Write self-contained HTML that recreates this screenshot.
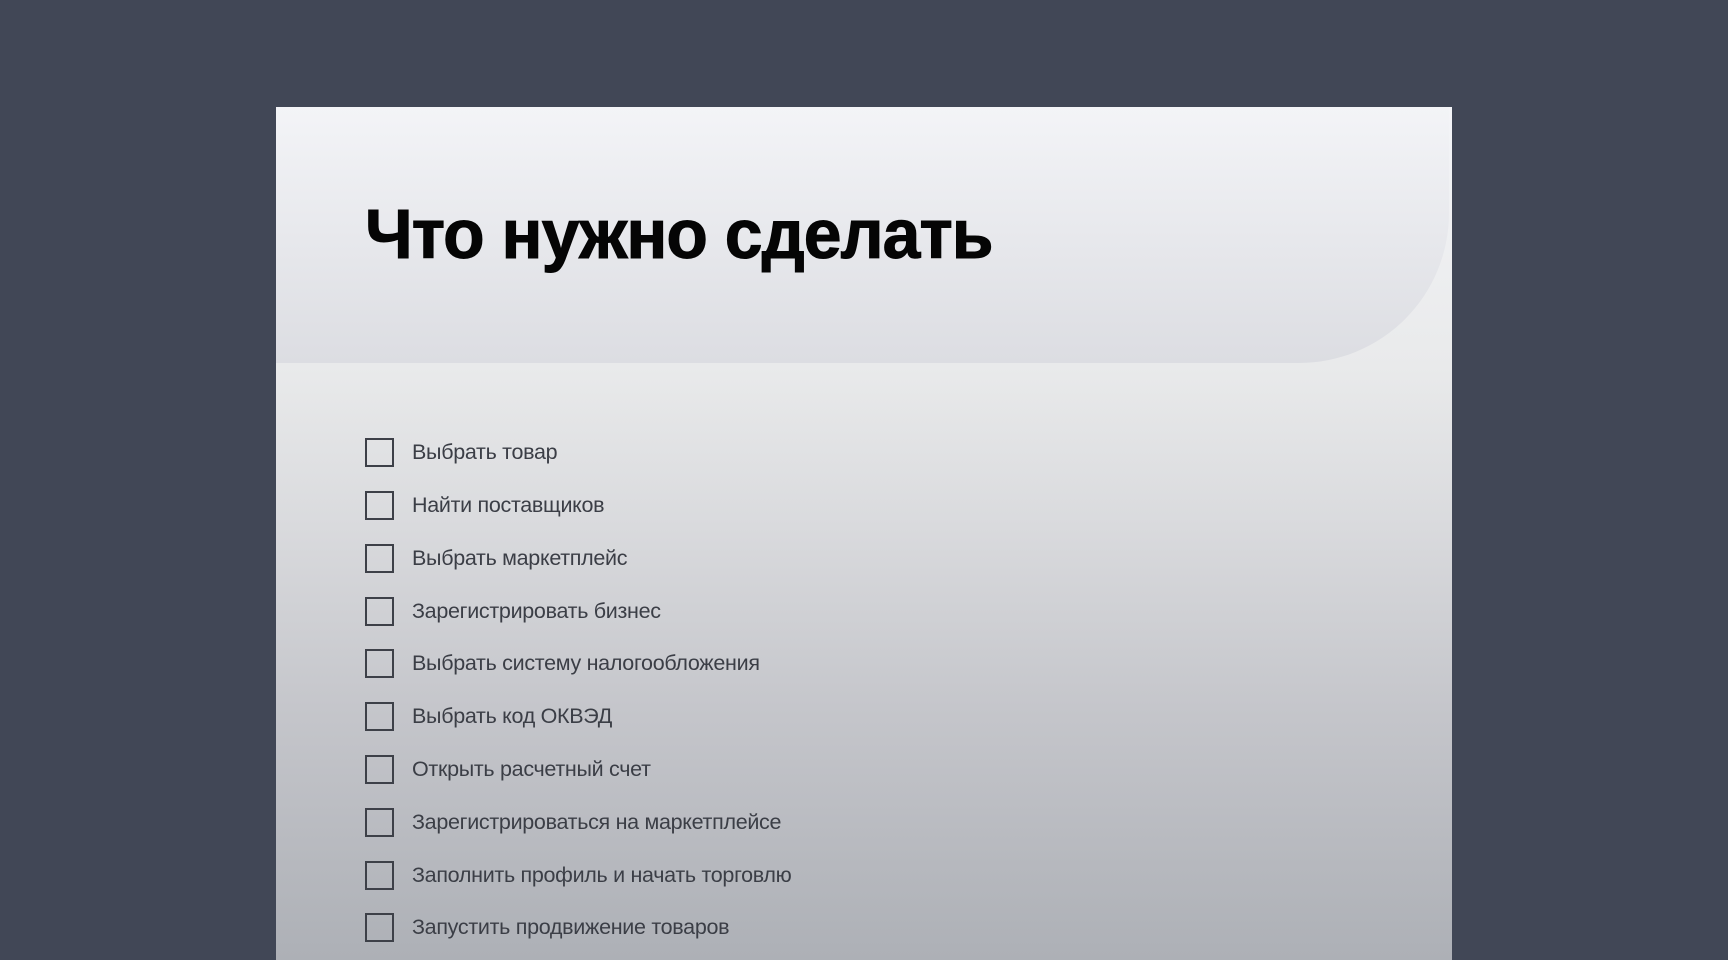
<!DOCTYPE html>
<html><head><meta charset="utf-8"><style>
html,body{margin:0;padding:0;width:1728px;height:960px;overflow:hidden;background:#414756;}
.card{position:absolute;left:276px;top:107px;width:1176px;height:853px;
background:linear-gradient(#f4f5f8 0px,#e9eaeb 260px,#d9dadd 420px,#c5c6cb 600px,#adb0b6 853px);}
.hdr{position:absolute;left:0;top:0;width:1173px;height:256px;border-bottom-right-radius:150px;
background:linear-gradient(#f3f4f7,#dcdde2);}
h1{position:absolute;left:365px;top:189px;margin:0;font-family:"Liberation Sans Narrow","Liberation Sans",sans-serif;font-weight:bold;font-size:70px;line-height:90px;color:#050505;letter-spacing:-1px;transform:scaleX(0.97);transform-origin:left center;-webkit-text-stroke:1px #050505;}
.item{position:absolute;left:365px;height:30px;display:flex;align-items:center;font-family:"Liberation Sans",sans-serif;font-size:21.5px;color:#3b3e46;letter-spacing:-0.3px;}
.box{width:25px;height:25px;border:2px solid #3d4048;margin-right:18px;box-sizing:content-box;}
</style></head><body>
<div class="card"><div class="hdr"></div></div>
<h1>Что нужно сделать</h1>
<div class="item" style="top:437px"><div class="box"></div>Выбрать товар</div>
<div class="item" style="top:490px"><div class="box"></div>Найти поставщиков</div>
<div class="item" style="top:543px"><div class="box"></div>Выбрать маркетплейс</div>
<div class="item" style="top:596px"><div class="box"></div>Зарегистрировать бизнес</div>
<div class="item" style="top:648px"><div class="box"></div>Выбрать систему налогообложения</div>
<div class="item" style="top:701px"><div class="box"></div>Выбрать код ОКВЭД</div>
<div class="item" style="top:754px"><div class="box"></div>Открыть расчетный счет</div>
<div class="item" style="top:807px"><div class="box"></div>Зарегистрироваться на маркетплейсе</div>
<div class="item" style="top:860px"><div class="box"></div>Заполнить профиль и начать торговлю</div>
<div class="item" style="top:912px"><div class="box"></div>Запустить продвижение товаров</div>
</body></html>
